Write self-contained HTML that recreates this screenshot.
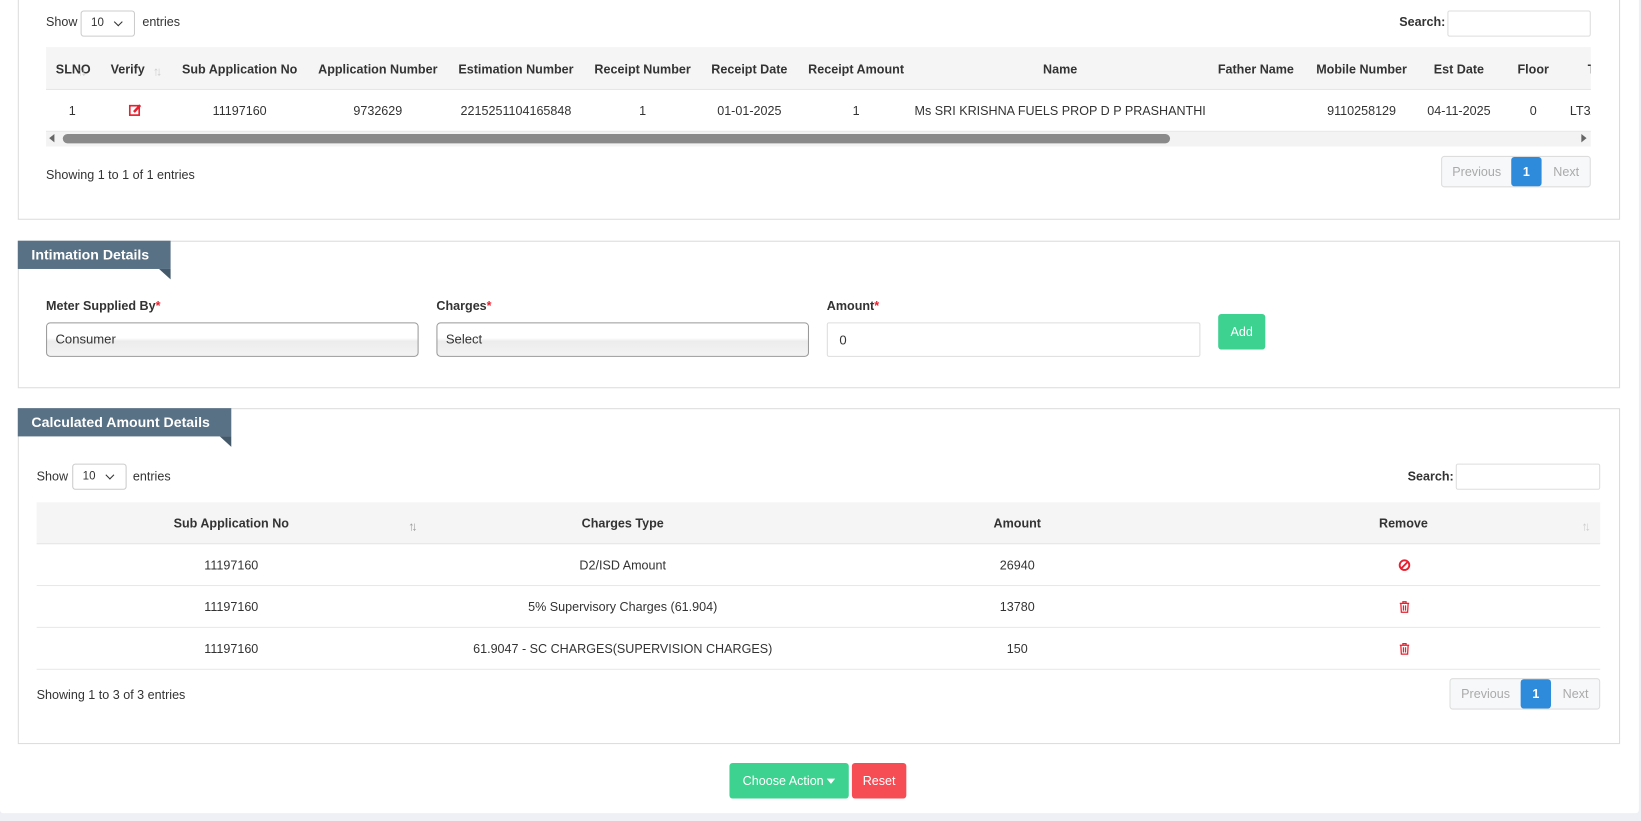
<!DOCTYPE html>
<html><head><meta charset="utf-8"><style>
*{box-sizing:border-box;margin:0;padding:0}
html,body{width:1641px;height:820px;overflow:hidden;background:#eef0f5}
#w{position:absolute;left:0;top:0;width:1568px;height:784px;transform:scale(1.04656);transform-origin:0 0;font-family:"Liberation Sans",sans-serif;font-size:12px;color:#333}
.card{position:absolute;left:0;top:-4px;width:1566px;height:781px;background:#fff;border-radius:0 0 3px 3px}
.a{position:absolute;white-space:nowrap}
.panel{position:absolute;border:1px solid #dcdcdc;background:#fff}
.tab{position:absolute;background:#587185;color:#fff;font-weight:bold;font-size:13.5px;padding-left:13px;line-height:27px}
.tab:after{content:"";position:absolute;right:0;bottom:-10px;border-top:10px solid #445a6b;border-left:11px solid transparent}
.sel{position:absolute;border:1px solid #ccc;border-radius:3px;font-size:11px;padding:5px 0 0 9px;background:#fff}
.sel i{position:absolute;right:12px;top:7px;width:6px;height:6px;border-right:1.5px solid #333;border-bottom:1.5px solid #333;transform:rotate(45deg)}
.inp{position:absolute;border:1px solid #ddd;border-radius:2px;background:#fff}
.hd{position:absolute;background:#f5f5f5;border-bottom:1px solid #e6e6e6}
.line{position:absolute;height:1px;background:#e8e8e8}
.c{position:absolute;text-align:center;transform:translateX(-50%);white-space:nowrap}
.b{font-weight:bold}
.pg{position:absolute;height:30px;border:1px solid #ddd;border-radius:3px;background:#f7f8fa;color:#aaa;line-height:28px;font-size:12px}
.pg span{position:absolute;top:0;height:28px;text-align:center}
.pg .on{background:#2e8bdb;color:#fff;border-radius:3px;font-weight:bold}
.fsel{position:absolute;border:1px solid #999;border-radius:4px;background:linear-gradient(#fff,#fff 45%,#ececec 55%,#f3f3f3);padding:8px 0 0 8px;font-size:12.5px}
.srt{position:absolute;color:#ccc;font-size:12px;letter-spacing:-3px}
</style></head><body><div id="w">
<div class="card"></div>

<div class="panel" style="left:17px;top:-5px;width:1531px;height:215px"></div>
<div class="a" style="left:44px;top:14px">Show</div>
<div class="sel" style="left:77px;top:10px;width:52px;height:25px">10<i></i></div>
<div class="a" style="left:136px;top:14px">entries</div>
<div class="a b" style="left:1337px;top:14px">Search:</div>
<div class="inp" style="left:1383px;top:10px;width:137px;height:25px"></div>
<div class="hd" style="left:44px;top:45px;width:1476px;height:41px"></div>
<div class="c b" style="left:70px;top:59px">SLNO</div>
<div class="srt" style="left:74px;top:61px">↑↓</div>
<div class="c b" style="left:122px;top:59px">Verify</div>
<div class="srt" style="left:146px;top:61px">↑↓</div>
<div class="c b" style="left:229px;top:59px">Sub Application No</div>
<div class="c b" style="left:361px;top:59px">Application Number</div>
<div class="c b" style="left:493px;top:59px">Estimation Number</div>
<div class="c b" style="left:614px;top:59px">Receipt Number</div>
<div class="c b" style="left:716px;top:59px">Receipt Date</div>
<div class="c b" style="left:818px;top:59px">Receipt Amount</div>
<div class="c b" style="left:1013px;top:59px">Name</div>
<div class="c b" style="left:1200px;top:59px">Father Name</div>
<div class="c b" style="left:1301px;top:59px">Mobile Number</div>
<div class="c b" style="left:1394px;top:59px">Est Date</div>
<div class="c b" style="left:1465px;top:59px">Floor</div>
<div class="a b" style="left:1517px;top:59px;width:3px;overflow:hidden">T</div>
<div class="c" style="left:69px;top:99px">1</div>
<svg class="a" style="left:123px;top:99px" width="13" height="12" viewBox="0 0 13 12"><rect x="1" y="2" width="9" height="9" fill="none" stroke="#e8202f" stroke-width="1.6"/><path d="M5 8 L11 1.5" stroke="#e8202f" stroke-width="2.4"/></svg>
<div class="c" style="left:229px;top:99px">11197160</div>
<div class="c" style="left:361px;top:99px">9732629</div>
<div class="c" style="left:493px;top:99px">2215251104165848</div>
<div class="c" style="left:614px;top:99px">1</div>
<div class="c" style="left:716px;top:99px">01-01-2025</div>
<div class="c" style="left:818px;top:99px">1</div>
<div class="c" style="left:1013px;top:99px">Ms SRI KRISHNA FUELS PROP D P PRASHANTHI</div>
<div class="c" style="left:1301px;top:99px">9110258129</div>
<div class="c" style="left:1394px;top:99px">04-11-2025</div>
<div class="c" style="left:1465px;top:99px">0</div>
<div class="a" style="left:1500px;top:99px;width:20px;overflow:hidden">LT3A</div>
<div class="a" style="left:44px;top:125px;width:1476px;height:15px;background:#f3f3f3;border-top:1px solid #e8e8e8"></div>
<div class="a" style="left:47px;top:128px;border-right:5px solid #666;border-top:4px solid transparent;border-bottom:4px solid transparent"></div>
<div class="a" style="left:1511px;top:128px;border-left:5px solid #666;border-top:4px solid transparent;border-bottom:4px solid transparent"></div>
<div class="a" style="left:60px;top:128px;width:1058px;height:9px;background:#8a8a8a;border-radius:5px"></div>
<div class="a" style="left:44px;top:160px">Showing 1 to 1 of 1 entries</div>
<div class="pg" style="left:1377px;top:149px;width:143px"><span style="left:0;width:66px">Previous</span><span class="on" style="left:66px;width:29px">1</span><span style="left:95px;width:47px">Next</span></div>

<div class="panel" style="left:17px;top:230px;width:1531px;height:141px"></div>
<div class="tab" style="left:17px;top:230px;width:146px;height:27px">Intimation Details</div>
<div class="a b" style="left:44px;top:285px">Meter Supplied By<span style="color:#e8202f">*</span></div>
<div class="a b" style="left:417px;top:285px">Charges<span style="color:#e8202f">*</span></div>
<div class="a b" style="left:790px;top:285px">Amount<span style="color:#e8202f">*</span></div>
<div class="fsel" style="left:44px;top:308px;width:356px;height:33px">Consumer</div>
<div class="fsel" style="left:417px;top:308px;width:356px;height:33px">Select</div>
<div class="inp" style="left:790px;top:308px;width:357px;height:33px;padding:9px 0 0 11px;font-size:12.5px">0</div>
<div class="a" style="left:1164px;top:300px;width:45px;height:34px;background:#3dd28f;border-radius:3px;color:#fff;text-align:center;line-height:34px">Add</div>

<div class="panel" style="left:17px;top:390px;width:1531px;height:321px"></div>
<div class="tab" style="left:17px;top:390px;width:204px;height:27px">Calculated Amount Details</div>
<div class="a" style="left:35px;top:448px">Show</div>
<div class="sel" style="left:69px;top:443px;width:52px;height:25px">10<i></i></div>
<div class="a" style="left:127px;top:448px">entries</div>
<div class="a b" style="left:1345px;top:448px">Search:</div>
<div class="inp" style="left:1391px;top:443px;width:138px;height:25px"></div>
<div class="hd" style="left:35px;top:480px;width:1494px;height:40px"></div>
<div class="c b" style="left:221px;top:493px">Sub Application No</div>
<div class="srt" style="left:390px;top:496px;color:#999">↑↓</div>
<div class="c b" style="left:595px;top:493px">Charges Type</div>
<div class="c b" style="left:972px;top:493px">Amount</div>
<div class="c b" style="left:1341px;top:493px">Remove</div>
<div class="srt" style="left:1511px;top:496px">↑↓</div>
<div class="line" style="left:35px;top:559px;width:1494px"></div>
<div class="line" style="left:35px;top:599px;width:1494px"></div>
<div class="line" style="left:35px;top:639px;width:1494px"></div>
<div class="c" style="left:221px;top:533px">11197160</div>
<div class="c" style="left:595px;top:533px">D2/ISD Amount</div>
<div class="c" style="left:972px;top:533px">26940</div>
<svg class="a" style="left:1336px;top:534px" width="12" height="12" viewBox="0 0 12 12"><circle cx="6" cy="6" r="4.6" fill="none" stroke="#e8202f" stroke-width="1.8"/><path d="M3 9L9 3" stroke="#e8202f" stroke-width="1.8"/></svg>
<div class="c" style="left:221px;top:573px">11197160</div>
<div class="c" style="left:595px;top:573px">5% Supervisory Charges (61.904)</div>
<div class="c" style="left:972px;top:573px">13780</div>
<svg class="a" style="left:1337px;top:574px" width="10" height="12" viewBox="0 0 10 12"><path d="M0.5 2.5H9.5M3.5 2.5V1H6.5V2.5M1.5 2.5L2 11H8L8.5 2.5M4 4.5V9.5M6 4.5V9.5" fill="none" stroke="#e8202f" stroke-width="1.2"/></svg>
<div class="c" style="left:221px;top:613px">11197160</div>
<div class="c" style="left:595px;top:613px">61.9047 - SC CHARGES(SUPERVISION CHARGES)</div>
<div class="c" style="left:972px;top:613px">150</div>
<svg class="a" style="left:1337px;top:614px" width="10" height="12" viewBox="0 0 10 12"><path d="M0.5 2.5H9.5M3.5 2.5V1H6.5V2.5M1.5 2.5L2 11H8L8.5 2.5M4 4.5V9.5M6 4.5V9.5" fill="none" stroke="#e8202f" stroke-width="1.2"/></svg>
<div class="a" style="left:35px;top:657px">Showing 1 to 3 of 3 entries</div>
<div class="pg" style="left:1385px;top:648px;width:144px"><span style="left:0;width:67px">Previous</span><span class="on" style="left:67px;width:29px">1</span><span style="left:96px;width:47px">Next</span></div>

<div class="a" style="left:697px;top:729px;width:114px;height:34px;background:#3dd28f;border-radius:3px;color:#fff;text-align:center;line-height:34px">Choose Action <span style="display:inline-block;border-top:5px solid #fff;border-left:4px solid transparent;border-right:4px solid transparent;vertical-align:middle"></span></div>
<div class="a" style="left:814px;top:729px;width:52px;height:34px;background:#f64c54;border-radius:3px;color:#fff;text-align:center;line-height:34px">Reset</div>
</div></body></html>
